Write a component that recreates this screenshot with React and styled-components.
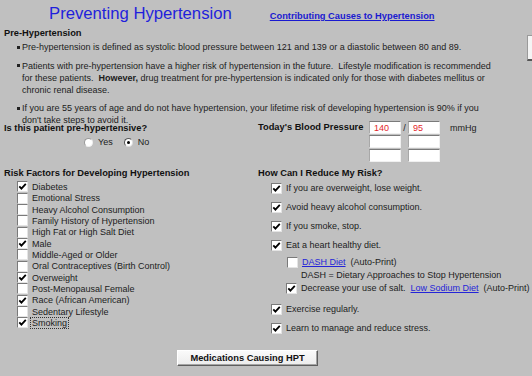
import React from "react";
import styled, { createGlobalStyle } from "styled-components";

const GlobalStyle = createGlobalStyle`
  html, body { margin: 0; padding: 0; background: #c0c0c0; }
  body { font-family: "Liberation Sans", Arial, sans-serif; }
  * { box-sizing: border-box; }
`;

const Page = styled.div`
  position: relative;
  width: 532px;
  height: 376px;
  overflow: hidden;
  background: #c0c0c0;
  color: #1c1c1c;
  font-size: 9px;
  padding-left: 4px;
`;

const TitleRow = styled.div`
  display: flex;
  align-items: baseline;
  height: 27px;
  padding-left: 45px;
`;

const Title = styled.h1`
  margin: 0;
  font-size: 16.7px;
  font-weight: normal;
  line-height: 27px;
  color: #1f1fdc;
  white-space: nowrap;
`;

const TopLink = styled.a`
  margin-left: 38px;
  font-size: 9.3px;
  font-weight: bold;
  color: #1a1ad0;
  text-decoration: underline;
  white-space: nowrap;
`;

const EdgeTab = styled.div`
  position: absolute;
  left: 527px;
  top: 35px;
  width: 14px;
  height: 26px;
  background: #f4f4f4;
  border: 1px solid #9a9a9a;
  border-bottom: 2px solid #555;
`;

const SectionHead = styled.div`
  font-weight: bold;
  font-size: 9.3px;
  line-height: ${(p) => p.$lh || 12}px;
  color: #111;
  white-space: nowrap;
`;

const BulletList = styled.ul`
  list-style: none;
  margin: 2px 0 0;
  padding: 0 0 0 18px;
  display: flex;
  flex-direction: column;
  gap: 6.5px;
`;

const Bullet = styled.li`
  position: relative;
  line-height: 12px;
  white-space: nowrap;
  &::before {
    content: "";
    position: absolute;
    left: -5px;
    top: 4.5px;
    width: 3px;
    height: 3px;
    background: #222;
  }
`;

const TwoCols = styled.div`
  display: grid;
  grid-template-columns: 254px 1fr;
  margin-top: ${(p) => p.$mt}px;
`;

const RadioRow = styled.div`
  display: flex;
  align-items: center;
  height: 14px;
  padding-left: 80px;
`;

const RadioOption = styled.label`
  display: flex;
  align-items: center;
  gap: 5px;
  margin-right: 11px;
`;

const Radio = styled.span`
  position: relative;
  width: 9px;
  height: 9px;
  border-radius: 50%;
  background: #fff;
  border: 1px solid;
  border-color: ${(p) => (p.$checked ? "#555 #ddd #ddd #555" : "#999 #eee #eee #999")};
  &::after {
    content: "";
    display: ${(p) => (p.$checked ? "block" : "none")};
    position: absolute;
    left: 2px;
    top: 2px;
    width: 3px;
    height: 3px;
    border-radius: 50%;
    background: #000;
  }
`;

const BPGrid = styled.div`
  display: grid;
  grid-template-columns: 111px 32px 7px 32px auto;
  grid-auto-rows: 13px;
  row-gap: 1px;
  align-items: center;
`;

const BPText = styled.span`
  text-align: ${(p) => p.$align || "left"};
  padding-left: ${(p) => p.$pl || 0}px;
  white-space: nowrap;
`;

const BPInput = styled.input`
  width: 32px;
  height: 13px;
  margin: 0;
  padding: 0 0 0 4px;
  background: #fff;
  border: 1px solid;
  border-color: #7a7a7a #f0f0f0 #f0f0f0 #a8a8a8;
  font-family: "Liberation Sans", Arial, sans-serif;
  font-size: 9px;
  color: #e3262b;
  outline: none;
`;

const Column = styled.div`
  display: flex;
  flex-direction: column;
`;

const RiskList = styled.div`
  display: flex;
  flex-direction: column;
  margin-top: 2.33px;
`;

const RiskItem = styled.label`
  display: flex;
  align-items: center;
  gap: 4px;
  height: 11.33px;
  padding-left: 13px;
  white-space: nowrap;
`;

const ReduceList = styled.div`
  display: flex;
  flex-direction: column;
  gap: 5px;
  margin-top: 2px;
`;

const ReduceItem = styled.label`
  display: flex;
  align-items: center;
  gap: 4px;
  height: 14px;
  padding-left: ${(p) => p.$pl || 13}px;
  white-space: nowrap;
`;

const SubGroup = styled.div`
  display: flex;
  flex-direction: column;
  margin: -2px 0 2px;
`;

const Note = styled.div`
  line-height: 12px;
  padding-left: 43px;
  white-space: nowrap;
`;

const Box = styled.span`
  display: flex;
  align-items: center;
  justify-content: center;
  flex-shrink: 0;
  width: 11px;
  height: 11px;
  background: #fff;
  border: 1px solid;
  border-color: #7a7a7a #e4e4e4 #e4e4e4 #7a7a7a;
`;

const Focus = styled.span`
  outline: 1px dotted #333;
  padding: 0 1px;
  margin-left: -1px;
`;

const InlineLink = styled.a`
  color: #2424d8;
  text-decoration: underline;
`;

const AutoPrint = styled.span`
  margin-left: 1px;
`;

const Footer = styled.div`
  padding-left: 173px;
  margin-top: 15px;
`;

const Button = styled.button`
  width: 141px;
  height: 16px;
  margin: 0;
  padding: 0;
  font-family: "Liberation Sans", Arial, sans-serif;
  font-size: 9.3px;
  font-weight: bold;
  color: #111;
  background: linear-gradient(#fafafa, #ececec);
  border: 1px solid;
  border-color: #fff #5e5e5e #5e5e5e #fff;
  box-shadow: inset -1px -1px 0 #a4a4a4;
`;

const Checkbox = ({ checked }) => (
  <Box>
    {checked && (
      <svg width="9" height="9" viewBox="0 0 9 9">
        <polyline
          points="1.3,4.3 3.4,6.6 7.8,1.8"
          fill="none"
          stroke="#000"
          strokeWidth="1.8"
        />
      </svg>
    )}
  </Box>
);

const riskFactors = [
  ["Diabetes", true],
  ["Emotional Stress", false],
  ["Heavy Alcohol Consumption", false],
  ["Family History of Hypertension", false],
  ["High Fat or High Salt Diet", false],
  ["Male", true],
  ["Middle-Aged or Older", false],
  ["Oral Contraceptives (Birth Control)", false],
  ["Overweight", true],
  ["Post-Menopausal Female", false],
  ["Race (African American)", true],
  ["Sedentary Lifestyle", false],
  ["Smoking", true, true],
];

export default function App() {
  return (
    <>
      <GlobalStyle />
      <Page>
        <TitleRow>
          <Title>Preventing Hypertension</Title>
          <TopLink href="#">Contributing Causes to Hypertension</TopLink>
        </TitleRow>
        <EdgeTab />

        <SectionHead>Pre-Hypertension</SectionHead>
        <BulletList>
          <Bullet>
            Pre-hypertension is defined as systolic blood pressure between 121 and 139 or a diastolic between 80 and 89.
          </Bullet>
          <Bullet>
            Patients with pre-hypertension have a higher risk of hypertension in the future.&nbsp; Lifestyle modification is recommended
            <br />
            for these patients.&nbsp; <b>However,</b> drug treatment for pre-hypertension is indicated only for those with diabetes mellitus or
            <br />
            chronic renal disease.
          </Bullet>
          <Bullet>
            If you are 55 years of age and do not have hypertension, your lifetime risk of developing hypertension is 90% if you
            <br />
            don't take steps to avoid it.
          </Bullet>
        </BulletList>

        <TwoCols $mt={-5}>
          <Column>
            <SectionHead $lh={14}>Is this patient pre-hypertensive?</SectionHead>
            <RadioRow>
              <RadioOption>
                <Radio />
                Yes
              </RadioOption>
              <RadioOption>
                <Radio $checked />
                No
              </RadioOption>
            </RadioRow>
          </Column>
          <BPGrid>
            <SectionHead $lh={13}>Today's Blood Pressure</SectionHead>
            <BPInput readOnly value="140" />
            <BPText $align="center">/</BPText>
            <BPInput readOnly value="95" />
            <BPText $pl={10}>mmHg</BPText>
            <span />
            <BPInput readOnly value="" />
            <span />
            <BPInput readOnly value="" />
            <span />
            <span />
            <BPInput readOnly value="" />
            <span />
            <BPInput readOnly value="" />
            <span />
          </BPGrid>
        </TwoCols>

        <TwoCols $mt={5}>
          <Column>
            <SectionHead>Risk Factors for Developing Hypertension</SectionHead>
            <RiskList>
              {riskFactors.map(([label, checked, focused]) => (
                <RiskItem key={label}>
                  <Checkbox checked={checked} />
                  {focused ? <Focus>{label}</Focus> : <span>{label}</span>}
                </RiskItem>
              ))}
            </RiskList>
          </Column>
          <Column>
            <SectionHead>How Can I Reduce My Risk?</SectionHead>
            <ReduceList>
              <ReduceItem>
                <Checkbox checked />
                If you are overweight, lose weight.
              </ReduceItem>
              <ReduceItem>
                <Checkbox checked />
                Avoid heavy alcohol consumption.
              </ReduceItem>
              <ReduceItem>
                <Checkbox checked />
                If you smoke, stop.
              </ReduceItem>
              <ReduceItem>
                <Checkbox checked />
                Eat a heart healthy diet.
              </ReduceItem>
              <SubGroup>
                <ReduceItem $pl={29}>
                  <Checkbox />
                  <InlineLink href="#">DASH Diet</InlineLink>
                  <AutoPrint>(Auto-Print)</AutoPrint>
                </ReduceItem>
                <Note>DASH = Dietary Approaches to Stop Hypertension</Note>
                <ReduceItem $pl={28}>
                  <Checkbox checked />
                  <span>Decrease your use of salt.</span>
                  <AutoPrint>
                    <InlineLink href="#">Low Sodium Diet</InlineLink>
                  </AutoPrint>
                  <AutoPrint>(Auto-Print)</AutoPrint>
                </ReduceItem>
              </SubGroup>
              <ReduceItem>
                <Checkbox checked />
                Exercise regularly.
              </ReduceItem>
              <ReduceItem>
                <Checkbox checked />
                Learn to manage and reduce stress.
              </ReduceItem>
            </ReduceList>
          </Column>
        </TwoCols>

        <Footer>
          <Button type="button">Medications Causing HPT</Button>
        </Footer>
      </Page>
    </>
  );
}
